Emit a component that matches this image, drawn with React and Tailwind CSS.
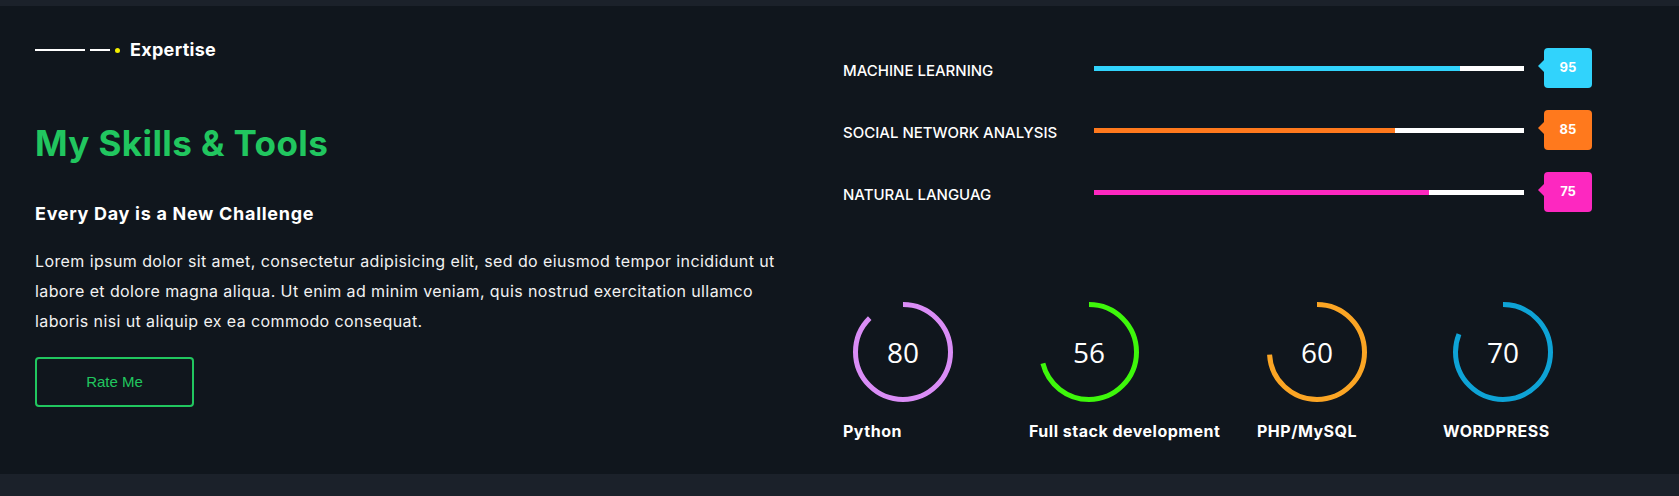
import React from "react";

const bars = [
  { label: "MACHINE LEARNING", value: 95, fill: 85, color: "bg-[#31d3fc]", arrow: "border-r-[#31d3fc]" },
  { label: "SOCIAL NETWORK ANALYSIS", value: 85, fill: 70, color: "bg-[#ff791d]", arrow: "border-r-[#ff791d]" },
  { label: "NATURAL LANGUAG", value: 75, fill: 78, color: "bg-[#fd28c0]", arrow: "border-r-[#fd28c0]" },
];

// arc = how much of the ring is drawn (%), as it looks in the design
const circles = [
  { label: "Python", value: 80, arc: 87.5, color: "#da8df6", width: "w-[186px]" },
  { label: "Full stack development", value: 56, arc: 71, color: "#3ef70b", width: "w-[228px]" },
  { label: "PHP/MySQL", value: 60, arc: 74, color: "#fba524", width: "w-[186px]" },
  { label: "WORDPRESS", value: 70, arc: 81, color: "#0ea3d6", width: "w-[186px]" },
];

// circular progress ring, starts at 12 o'clock and runs clockwise
const Ring = ({ value, arc, color }) => {
  const r = 47.5;
  const c = 2 * Math.PI * r;
  return (
    <div className="relative w-[100px] h-[100px] ml-[10px]">
      <svg width="100" height="100" viewBox="0 0 100 100" className="-rotate-90">
        <circle
          cx="50"
          cy="50"
          r={r}
          fill="none"
          stroke={color}
          strokeWidth="5"
          strokeDasharray={`${(c * arc) / 100} ${c}`}
        />
      </svg>
      <span className="absolute inset-0 flex items-center justify-center font-['Open_Sans',sans-serif] text-[28px] text-white">
        {value}
      </span>
    </div>
  );
};

const App = () => {
  return (
    <div className="w-full h-[496px] bg-[#1b212a] pt-[6px] font-['Inter',sans-serif]">
      <section className="flex bg-[#10161d] h-[468px]">
        {/* left column */}
        <div className="w-[843px] shrink-0 pl-[35px] pt-[32px]">
          <div className="flex items-center h-[24px]">
            <span className="w-[50px] h-[2px] bg-white" />
            <span className="w-[20px] h-[2px] bg-white ml-[5px]" />
            <span className="w-[5px] h-[5px] rounded-full bg-[#f3ee00] ml-[5px]" />
            <span className="ml-[10px] text-[18px] leading-[24px] font-bold tracking-[0.3px] text-white">
              Expertise
            </span>
          </div>

          <h2 className="mt-[61px] text-[35px] leading-[40px] font-bold tracking-[0.4px] text-[#21c65f]">
            My Skills &amp; Tools
          </h2>

          <h3 className="mt-[37px] text-[18px] leading-[28px] font-bold tracking-[0.7px] text-white">
            Every Day is a New Challenge
          </h3>

          <p className="mt-[18px] w-[760px] text-[16px] leading-[30px] tracking-[0.4px] text-[#f2f2f2]">
            Lorem ipsum dolor sit amet, consectetur adipisicing elit, sed do eiusmod tempor
            incididunt ut labore et dolore magna aliqua. Ut enim ad minim veniam, quis nostrud
            exercitation ullamco laboris nisi ut aliquip ex ea commodo consequat.
          </p>

          <button className="mt-[21px] w-[159px] h-[50px] border-2 border-[#21c65f] rounded-[4px] font-['Liberation_Sans',Arial,sans-serif] text-[15px] text-[#21c65f]">
            Rate Me
          </button>
        </div>

        {/* right column */}
        <div className="pt-[42px]">
          <div className="flex flex-col gap-[22px]">
            {bars.map((b) => (
              <div key={b.label} className="flex items-center h-[40px]">
                <span className="w-[251px] mt-[6px] text-[15px] font-medium text-white">
                  {b.label}
                </span>
                <div className="w-[430px] h-[5px] bg-white flex">
                  <div className={`h-full ${b.color}`} style={{ width: `${b.fill}%` }} />
                </div>
                <div className="relative ml-[20px] w-[48px] h-[40px]">
                  <span
                    className={`absolute left-[-6px] top-[12px] w-0 h-0 border-y-[6px] border-y-transparent border-r-[6px] ${b.arrow}`}
                  />
                  <div
                    className={`w-full h-full rounded-[4px] ${b.color} flex items-center justify-center text-[13px] font-bold text-white`}
                  >
                    {b.value}
                  </div>
                </div>
              </div>
            ))}
          </div>

          <div className="flex mt-[90px]">
            {circles.map((c) => (
              <div key={c.label} className={c.width}>
                <Ring value={c.value} arc={c.arc} color={c.color} />
                <div className="mt-[17px] text-[16px] leading-[24px] font-bold tracking-[0.5px] text-white whitespace-nowrap">
                  {c.label}
                </div>
              </div>
            ))}
          </div>
        </div>
      </section>
    </div>
  );
};

export default App;
